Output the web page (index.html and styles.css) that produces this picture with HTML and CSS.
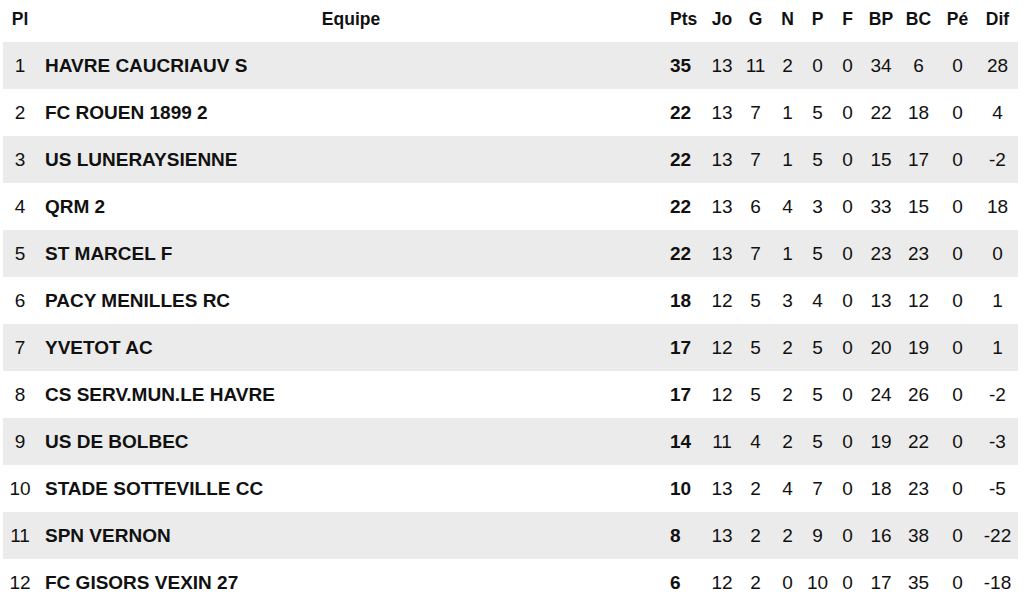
FILE: index.html
```html
<!DOCTYPE html>
<html lang="fr">
<head>
<meta charset="utf-8">
<title>Classement</title>
<link rel="stylesheet" href="styles.css">
</head>
<body>
<table class="standings">
  <colgroup>
    <col class="c-pl"><col class="c-team"><col class="c-pts"><col class="c-jo"><col class="c-g"><col class="c-n"><col class="c-p"><col class="c-f"><col class="c-bp"><col class="c-bc"><col class="c-pe"><col class="c-dif">
  </colgroup>
  <thead>
    <tr>
      <th>Pl</th><th>Equipe</th><th class="pts">Pts</th><th>Jo</th><th>G</th><th>N</th><th>P</th><th>F</th><th>BP</th><th>BC</th><th>Pé</th><th>Dif</th>
    </tr>
  </thead>
  <tbody>
    <tr><td>1</td><td class="team">HAVRE CAUCRIAUV S</td><td class="pts">35</td><td>13</td><td>11</td><td>2</td><td>0</td><td>0</td><td>34</td><td>6</td><td>0</td><td>28</td></tr>
    <tr><td>2</td><td class="team">FC ROUEN 1899 2</td><td class="pts">22</td><td>13</td><td>7</td><td>1</td><td>5</td><td>0</td><td>22</td><td>18</td><td>0</td><td>4</td></tr>
    <tr><td>3</td><td class="team">US LUNERAYSIENNE</td><td class="pts">22</td><td>13</td><td>7</td><td>1</td><td>5</td><td>0</td><td>15</td><td>17</td><td>0</td><td>-2</td></tr>
    <tr><td>4</td><td class="team">QRM 2</td><td class="pts">22</td><td>13</td><td>6</td><td>4</td><td>3</td><td>0</td><td>33</td><td>15</td><td>0</td><td>18</td></tr>
    <tr><td>5</td><td class="team">ST MARCEL F</td><td class="pts">22</td><td>13</td><td>7</td><td>1</td><td>5</td><td>0</td><td>23</td><td>23</td><td>0</td><td>0</td></tr>
    <tr><td>6</td><td class="team">PACY MENILLES RC</td><td class="pts">18</td><td>12</td><td>5</td><td>3</td><td>4</td><td>0</td><td>13</td><td>12</td><td>0</td><td>1</td></tr>
    <tr><td>7</td><td class="team">YVETOT AC</td><td class="pts">17</td><td>12</td><td>5</td><td>2</td><td>5</td><td>0</td><td>20</td><td>19</td><td>0</td><td>1</td></tr>
    <tr><td>8</td><td class="team">CS SERV.MUN.LE HAVRE</td><td class="pts">17</td><td>12</td><td>5</td><td>2</td><td>5</td><td>0</td><td>24</td><td>26</td><td>0</td><td>-2</td></tr>
    <tr><td>9</td><td class="team">US DE BOLBEC</td><td class="pts">14</td><td>11</td><td>4</td><td>2</td><td>5</td><td>0</td><td>19</td><td>22</td><td>0</td><td>-3</td></tr>
    <tr><td>10</td><td class="team">STADE SOTTEVILLE CC</td><td class="pts">10</td><td>13</td><td>2</td><td>4</td><td>7</td><td>0</td><td>18</td><td>23</td><td>0</td><td>-5</td></tr>
    <tr><td>11</td><td class="team">SPN VERNON</td><td class="pts">8</td><td>13</td><td>2</td><td>2</td><td>9</td><td>0</td><td>16</td><td>38</td><td>0</td><td>-22</td></tr>
    <tr><td>12</td><td class="team">FC GISORS VEXIN 27</td><td class="pts">6</td><td>12</td><td>2</td><td>0</td><td>10</td><td>0</td><td>17</td><td>35</td><td>0</td><td>-18</td></tr>
  </tbody>
</table>
</body>
</html>
```

FILE: styles.css
```css
html, body {
  margin: 0;
  padding: 0;
  background: #ffffff;
}

body {
  font-family: "Liberation Sans", Arial, Helvetica, sans-serif;
  font-size: 19px;
  color: #111111;
}

.standings {
  margin-left: 3px;
  width: 1015px;
  table-layout: fixed;
  border-collapse: collapse;
}

.c-pl { width: 34px; }
.c-team { width: 628px; }
.c-pts { width: 40px; }
.c-jo { width: 34px; }
.c-g { width: 33px; }
.c-n { width: 31px; }
.c-p { width: 29px; }
.c-f { width: 31px; }
.c-bp { width: 36px; }
.c-bc { width: 39px; }
.c-pe { width: 39px; }
.c-dif { width: 41px; }

.standings th,
.standings td {
  padding: 0;
  text-align: center;
  vertical-align: middle;
  white-space: nowrap;
}

.standings thead tr {
  height: 42px;
}

.standings th {
  font-size: 17.5px;
  font-weight: bold;
  padding-bottom: 3px;
}

.standings th.pts {
  text-align: left;
  padding-left: 5px;
}

.standings tbody tr {
  height: 47px;
}

.standings tbody tr:nth-child(odd) {
  background: #ebebeb;
}

.standings .team {
  text-align: left;
  padding-left: 8px;
  font-weight: bold;
}

.standings td.pts {
  text-align: left;
  padding-left: 5px;
  font-weight: bold;
}
```
